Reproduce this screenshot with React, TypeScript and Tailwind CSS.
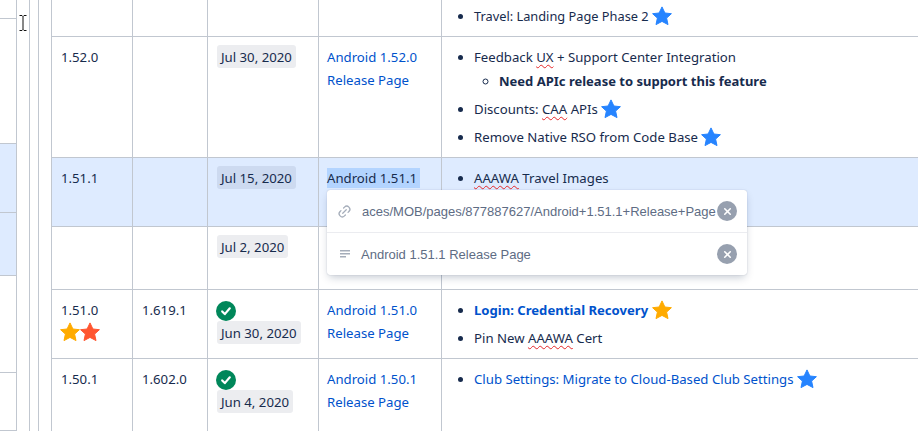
import type { FC, ReactNode } from "react";
import { Link2, X } from "lucide-react";

const Star: FC<{ color: string }> = ({ color }) => (
	<svg viewBox="0 0 20 20" className="inline-block h-5 w-5 align-[-5px]">
		<path
			d="M10 .9l2.9 6.1 6.5.7-4.8 4.4 1.4 6.5L10 15.4l-6 3.2 1.4-6.5L.6 7.7 7.1 7z"
			fill={color}
			stroke={color}
			strokeWidth="1"
			strokeLinejoin="round"
		/>
	</svg>
);

const Check: FC = () => (
	<svg viewBox="0 0 20 20" className="-ml-px block h-5 w-5">
		<circle cx="10" cy="10" r="10" fill="#00875a" />
		<path d="M6.2 10.4l2.6 2.7 5-5.8" fill="none" stroke="#fff" strokeWidth="2.2" strokeLinecap="round" strokeLinejoin="round" />
	</svg>
);

const DateTag: FC<{ children: ReactNode }> = ({ children }) => (
	<span className="block h-[23px] w-fit rounded-[3px] bg-[#091e4214] px-1 leading-[25px] whitespace-nowrap">{children}</span>
);

const Spell: FC<{ children: ReactNode }> = ({ children }) => (
	<span className="underline decoration-[#e5282a] decoration-wavy decoration-1 underline-offset-2">{children}</span>
);

const ReleaseLink: FC<{ version: string }> = ({ version }) => (
	<a className="text-[#0052cc]">
		Android {version}
		<br />
		Release Page
	</a>
);

const Item: FC<{ children: ReactNode }> = ({ children }) => (
	<li className="mt-1 leading-6 whitespace-nowrap first:mt-0">{children}</li>
);

const Bullets: FC<{ children: ReactNode }> = ({ children }) => (
	<ul className="list-disc pl-[32px]">{children}</ul>
);

const cell = "border-r border-b border-[#c1c7d0] px-[9px] pt-2 align-top";
const linkCell = "border-r border-b border-[#c1c7d0] px-2 pt-[9px] align-top";

const leftRows = [
	{ h: "h-[19px]", bg: "" },
	{ h: "h-[125px]", bg: "" },
	{ h: "h-[69px]", bg: "bg-[#deebff]" },
	{ h: "h-[63px]", bg: "bg-[#deebff]" },
	{ h: "h-[97px]", bg: "" },
	{ h: "h-[58px]", bg: "" },
];

const ClearButton: FC = () => (
	<span className="flex h-5 w-5 shrink-0 items-center justify-center rounded-full bg-[#97a0af]">
		<X size={11} color="#fff" strokeWidth={3.5} />
	</span>
);

export default function App() {
	return (
		<div className="relative flex h-[431px] w-[918px] overflow-hidden bg-white font-['Noto_Sans',sans-serif] text-[13.2px] leading-[23px] text-[#172b4d]">
			<div className="w-[17px] shrink-0 border-r border-[#c1c7d0]">
				{leftRows.map((row, i) => (
					<div key={i} className={`${row.h} ${row.bg} border-b border-[#c1c7d0]`} />
				))}
			</div>
			<div className="w-[13px] shrink-0 border-r border-[#c1c7d0]" />
			<div className="w-[9px] shrink-0 border-r border-[#c1c7d0]" />
			<div className="w-[13px] shrink-0 border-r border-[#c1c7d0]" />

			<table className="h-fit w-[866px] shrink-0 table-fixed border-separate border-spacing-0">
				<colgroup>
					<col className="w-[81px]" />
					<col className="w-[75px]" />
					<col className="w-[111px]" />
					<col className="w-[123px]" />
					<col />
				</colgroup>
				<tbody>
					<tr className="h-[37px]">
						<td className={cell} />
						<td className={cell} />
						<td className={cell} />
						<td className={cell} />
						<td className="border-b border-[#c1c7d0] pb-2 align-bottom">
							<Bullets>
								<Item>
									<span className="text-[12.8px]">Travel: Landing Page Phase 2</span> <Star color="#2684ff" />
								</Item>
							</Bullets>
						</td>
					</tr>
					<tr className="h-[121px]">
						<td className={linkCell + " pl-[9px]"}>1.52.0</td>
						<td className={cell} />
						<td className={cell}>
							<DateTag>Jul 30, 2020</DateTag>
						</td>
						<td className={linkCell}>
							<ReleaseLink version="1.52.0" />
						</td>
						<td className="border-b border-[#c1c7d0] pt-2 align-top">
							<Bullets>
								<Item>
									Feedback <Spell>UX</Spell> + Support Center Integration
									<ul className="list-[circle] pl-[25px]">
										<li className="text-[13px] font-bold">Need APIc release to support this feature</li>
									</ul>
								</Item>
								<Item>
									Discounts: <Spell>CAA</Spell> APIs <Star color="#2684ff" />
								</Item>
								<Item>
									Remove Native RSO from Code Base <Star color="#2684ff" />
								</Item>
							</Bullets>
						</td>
					</tr>
					<tr className="h-[69px] bg-[#deebff]">
						<td className={linkCell + " pl-[9px]"}>1.51.1</td>
						<td className={cell} />
						<td className={cell}>
							<DateTag>Jul 15, 2020</DateTag>
						</td>
						<td className={linkCell}>
							<span className="bg-[#b3d4ff] py-px pr-[3px]">Android 1.51.1</span>
						</td>
						<td className="border-b border-[#c1c7d0] pt-2 align-top">
							<Bullets>
								<Item>
									<Spell>AAAWA</Spell> Travel Images
								</Item>
							</Bullets>
						</td>
					</tr>
					<tr className="h-[63px]">
						<td className={cell} />
						<td className={cell} />
						<td className={cell}>
							<DateTag>Jul 2, 2020</DateTag>
						</td>
						<td className={cell} />
						<td className="border-b border-[#c1c7d0]" />
					</tr>
					<tr className="h-[69px]">
						<td className={linkCell + " pl-[9px]"}>
							1.51.0
							<div className="-ml-px flex">
								<Star color="#ffab00" />
								<Star color="#ff5630" />
							</div>
						</td>
						<td className={linkCell + " pl-[9px]"}>1.619.1</td>
						<td className={`${cell} pt-[11px]`}>
							<Check />
							<DateTag>Jun 30, 2020</DateTag>
						</td>
						<td className={linkCell}>
							<ReleaseLink version="1.51.0" />
						</td>
						<td className="border-b border-[#c1c7d0] pt-2 align-top">
							<Bullets>
								<Item>
									<b className="text-[13.1px] text-[#0052cc]">Login: Credential Recovery</b> <Star color="#ffab00" />
								</Item>
								<Item>
									Pin New <Spell>AAAWA</Spell> Cert
								</Item>
							</Bullets>
						</td>
					</tr>
					<tr className="h-[72px]">
						<td className="border-r border-[#c1c7d0] px-[9px] pt-[9px] align-top">1.50.1</td>
						<td className="border-r border-[#c1c7d0] px-[9px] pt-[9px] align-top">1.602.0</td>
						<td className="border-r border-[#c1c7d0] px-[9px] pt-[11px] align-top">
							<Check />
							<DateTag>Jun 4, 2020</DateTag>
						</td>
						<td className="border-r border-[#c1c7d0] px-2 pt-[9px] align-top">
							<ReleaseLink version="1.50.1" />
						</td>
						<td className="pt-2 align-top">
							<Bullets>
								<Item>
									<span className="text-[#0052cc]">Club Settings: Migrate to Cloud-Based Club Settings</span>{" "}
									<Star color="#2684ff" />
								</Item>
							</Bullets>
						</td>
					</tr>
				</tbody>
			</table>

			{/* link edit popup, sits over the table */}
			<div className="absolute top-[190px] left-[327px] w-[420px] rounded-[3px] bg-white font-['Liberation_Sans',sans-serif] text-[13px] text-[#5e6c84] shadow-[0_4px_8px_-2px_rgba(9,30,66,0.25),0_0_1px_rgba(9,30,66,0.31)]">
				<div className="flex h-[43px] items-center border-b border-[#ebecf0] pr-[10px] pl-[10px]">
					<Link2 size={15} color="#a5adba" className="mr-[10px] shrink-0 -rotate-45" />
					<span className="w-[355px] shrink-0 whitespace-nowrap">aces/MOB/pages/877887627/Android+1.51.1+Release+Page</span>
					<ClearButton />
				</div>
				<div className="flex h-[42px] items-center pr-[10px] pl-[13px]">
					<svg viewBox="0 0 10 8" className="mr-[11px] h-2 w-[10px] shrink-0">
						<path d="M0 0h10v1.5H0zM0 3h10v1.5H0zM0 6h6v1.5H0z" fill="#a5adba" />
					</svg>
					<span className="flex-1">Android 1.51.1 Release Page</span>
					<ClearButton />
				</div>
			</div>

			{/* text cursor */}
			<svg viewBox="0 0 8 16" className="absolute top-[15px] left-[19px] h-4 w-2">
				<path d="M0.5 0.5h2.5l1 1 1-1h2.5M4 1.5v13M0.5 15.5h2.5l1-1 1 1h2.5" fill="none" stroke="#111" strokeWidth="1" />
			</svg>
		</div>
	);
}
